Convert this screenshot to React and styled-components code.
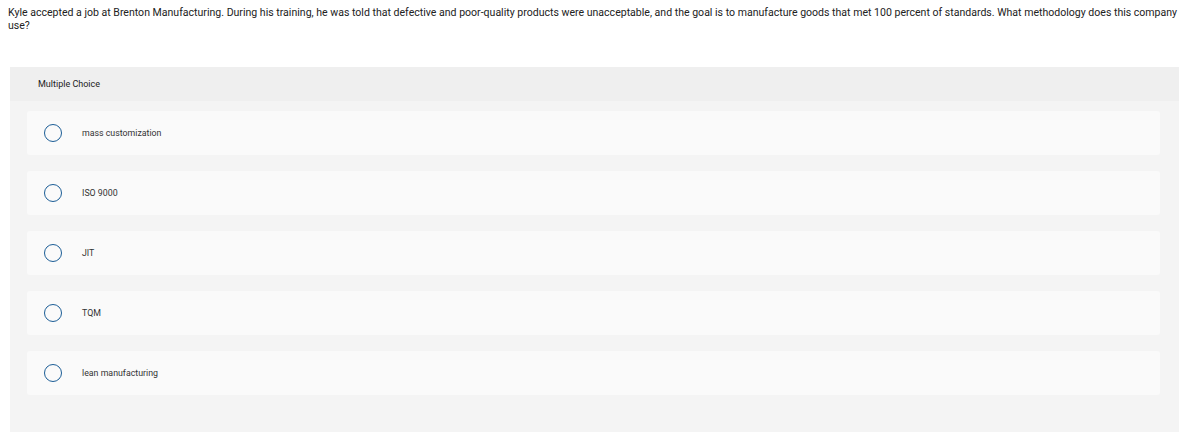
import React from "react";
import styled, { createGlobalStyle } from "styled-components";

const Global = createGlobalStyle`
  html, body { margin: 0; padding: 0; background: #fff; }
  body { font-family: Roboto, "Liberation Sans", sans-serif; color: #333; }
`;

const Page = styled.div`
  padding: 6px 9px 3px 8px;
`;

const Question = styled.p`
  margin: 0 0 35px 0;
  padding-right: 0;
  font-size: 10.55px;
  line-height: 13px;
  color: #222;
`;

const Panel = styled.section`
  margin: 0 0 0 2px;
  width: 1169px;
  background: #f4f4f4;
  padding-bottom: 37px;
`;

const Header = styled.div`
  background: #efefef;
  height: 34px;
  display: flex;
  align-items: center;
  padding-left: 28px;
  font-size: 9px;
  color: #222;
`;

const List = styled.div`
  display: flex;
  flex-direction: column;
  gap: 16px;
  padding: 10px 19px 0 17px;
`;

const Option = styled.label`
  height: 44px;
  background: #fafafa;
  border-radius: 3px;
  display: flex;
  align-items: center;
  padding-left: 17px;
  font-size: 8.8px;
  color: #333;
`;

const Radio = styled.span`
  width: 16px;
  height: 16px;
  border: 1.5px solid #1b5d96;
  border-radius: 50%;
  flex: none;
  margin-right: 20px;
`;

const options = [
  "mass customization",
  "ISO 9000",
  "JIT",
  "TQM",
  "lean manufacturing",
];

export default function App() {
  return (
    <>
      <Global />
      <Page>
        <Question>
          Kyle accepted a job at Brenton Manufacturing. During his training, he was told that defective and poor-quality products were unacceptable, and the goal is to manufacture goods that met 100 percent of standards. What methodology does this company use?
        </Question>
        <Panel>
          <Header>Multiple Choice</Header>
          <List>
            {options.map((o) => (
              <Option key={o}>
                <Radio />
                {o}
              </Option>
            ))}
          </List>
        </Panel>
      </Page>
    </>
  );
}
